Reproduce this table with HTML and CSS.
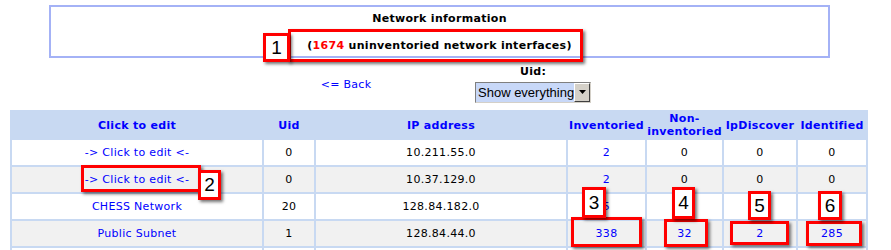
FILE: index.html
```html
<!DOCTYPE html>
<html>
<head>
<meta charset="utf-8">
<title>Network information</title>
<link rel="stylesheet" href="styles.css">
</head>
<body>
<div class="page">
  <div class="info">
    <p>Network information</p>
    <p class="count">(<span class="red">1674</span> uninventoried network interfaces)</p>
  </div>

  <div class="nav">
    <div class="back"><a href="#">&lt;= Back</a></div>
    <form class="uid-form">
      <label class="uid-label">Uid:</label>
      <div class="select">
        <span class="select-text">Show everything</span>
        <span class="select-btn"><svg width="9" height="5" viewBox="0 0 9 5"><path d="M1 0h7L4.5 4z" fill="#000"/></svg></span>
      </div>
    </form>
  </div>

  <table class="grid">
    <colgroup>
      <col class="c-name"><col class="c-uid"><col class="c-ip"><col class="c-inv"><col class="c-non"><col class="c-ipd"><col class="c-ident">
    </colgroup>
    <thead>
      <tr>
        <th><a href="#">Click to edit</a></th>
        <th><a href="#">Uid</a></th>
        <th><a href="#">IP address</a></th>
        <th><a href="#">Inventoried</a></th>
        <th><a href="#">Non-<br>inventoried</a></th>
        <th><a href="#">IpDiscover</a></th>
        <th><a href="#">Identified</a></th>
      </tr>
    </thead>
    <tbody>
      <tr>
        <td><a href="#">-&gt; Click to edit &lt;-</a></td>
        <td>0</td><td>10.211.55.0</td>
        <td><a href="#">2</a></td><td>0</td><td>0</td><td>0</td>
      </tr>
      <tr class="alt">
        <td><a href="#">-&gt; Click to edit &lt;-</a></td>
        <td>0</td><td>10.37.129.0</td>
        <td><a href="#">2</a></td><td>0</td><td>0</td><td>0</td>
      </tr>
      <tr>
        <td><a href="#">CHESS Network</a></td>
        <td>20</td><td>128.84.182.0</td>
        <td><a href="#">5</a></td><td>0</td><td>0</td><td>0</td>
      </tr>
      <tr class="alt">
        <td><a href="#">Public Subnet</a></td>
        <td>1</td><td>128.84.44.0</td>
        <td><a href="#">338</a></td><td><a href="#">32</a></td><td><a href="#">2</a></td><td><a href="#">285</a></td>
      </tr>
      <tr>
        <td></td><td></td><td></td><td></td><td></td><td></td><td></td>
      </tr>
    </tbody>
  </table>

  <!-- numbered callouts drawn over the page -->
  <div class="mark" style="left:288px;top:29px;width:295px;height:33px"></div>
  <div class="tag" style="left:263px;top:33px;width:27px;height:29px">1</div>

  <div class="mark" style="left:81px;top:165px;width:120px;height:27px"></div>
  <div class="tag" style="left:198px;top:170px;width:23px;height:30px">2</div>

  <div class="mark" style="left:571px;top:217px;width:71px;height:30px"></div>
  <div class="tag" style="left:582px;top:187px;width:24px;height:31px">3</div>

  <div class="mark" style="left:664px;top:219px;width:44px;height:28px"></div>
  <div class="tag" style="left:672px;top:187px;width:23px;height:32px">4</div>

  <div class="mark" style="left:730px;top:221px;width:59px;height:24px"></div>
  <div class="tag" style="left:748px;top:191px;width:23px;height:29px">5</div>

  <div class="mark" style="left:806px;top:221px;width:56px;height:25px"></div>
  <div class="tag" style="left:818px;top:191px;width:24px;height:29px">6</div>
</div>
</body>
</html>
```

FILE: styles.css
```css
html, body {
  margin: 0;
  padding: 0;
  background: #fff;
}

.page {
  position: relative;
  width: 879px;
  padding-top: 5px;
  font-family: "DejaVu Sans", Verdana, sans-serif;
  font-size: 11px;
  line-height: 13px;
  letter-spacing: 0.3px;
  color: #000;
}

a {
  color: #0000ff;
  text-decoration: none;
}

/* summary box */
.info {
  box-sizing: border-box;
  width: 781px;
  margin: 0 auto;
  border: 2px solid #a4b2f6;
  padding: 5px 0 4px;
  text-align: center;
  font-weight: bold;
}
.info p {
  margin: 0;
}
.info .count {
  margin-top: 14px;
}
.red {
  color: #ff0000;
}

/* back link + uid filter */
.nav {
  display: flex;
  align-items: center;
  margin-top: 7px;
  padding-left: 298px;
}
.back {
  width: 96px;
  text-align: center;
}
.uid-form {
  margin: 0 0 0 81px;
  width: 116px;
  display: flex;
  flex-direction: column;
  align-items: center;
}
.uid-label {
  font-weight: bold;
  margin-bottom: 4px;
}
.select {
  box-sizing: border-box;
  width: 116px;
  height: 21px;
  display: flex;
  align-items: stretch;
  border: 1px solid #7f7f7f;
  border-right-color: #d4d0c8;
  border-bottom-color: #d4d0c8;
  background: #c8d8f8;
  font-family: "Liberation Sans", Arial, sans-serif;
  font-size: 13px;
  letter-spacing: 0;
}
.select-text {
  flex: 1;
  padding-left: 2px;
  line-height: 19px;
  white-space: nowrap;
  overflow: hidden;
}
.select-btn {
  box-sizing: border-box;
  width: 16px;
  display: flex;
  align-items: center;
  justify-content: center;
  background: #d4d0c8;
  border: 1px solid;
  border-color: #fff #404040 #404040 #fff;
}

/* data grid */
.grid {
  width: 858px;
  margin: 7px 0 0 10px;
  table-layout: fixed;
  border-collapse: separate;
  border-spacing: 2px;
  background: #c8d9f2;
}
.c-name { width: 250px; }
.c-uid { width: 50px; }
.c-ip { width: 250px; }
.c-inv { width: 77px; }
.c-non { width: 75px; }
.c-ipd { width: 72px; }
.c-ident { width: 68px; }

.grid th {
  padding: 0;
  height: 26px;
  font-weight: bold;
  text-align: center;
  vertical-align: middle;
  background: #c8d9f2;
  white-space: nowrap;
}
.grid td {
  padding: 0;
  height: 25px;
  text-align: center;
  vertical-align: middle;
  background: #fff;
}
.grid tr.alt td {
  background: #f1f1f1;
}

/* numbered callouts */
.mark {
  position: absolute;
  box-sizing: border-box;
  border: 3px solid #f00;
  box-shadow: 2px 2px 3px rgba(0, 0, 0, 0.55);
}
.tag {
  position: absolute;
  box-sizing: border-box;
  border: 3px solid #f00;
  background: #fff;
  box-shadow: 2px 2px 3px rgba(0, 0, 0, 0.55);
  font-family: "Liberation Sans", Arial, sans-serif;
  font-size: 19px;
  line-height: 22px;
  letter-spacing: 0;
  text-align: center;
  color: #000;
  display: flex;
  align-items: center;
  justify-content: center;
}
```
